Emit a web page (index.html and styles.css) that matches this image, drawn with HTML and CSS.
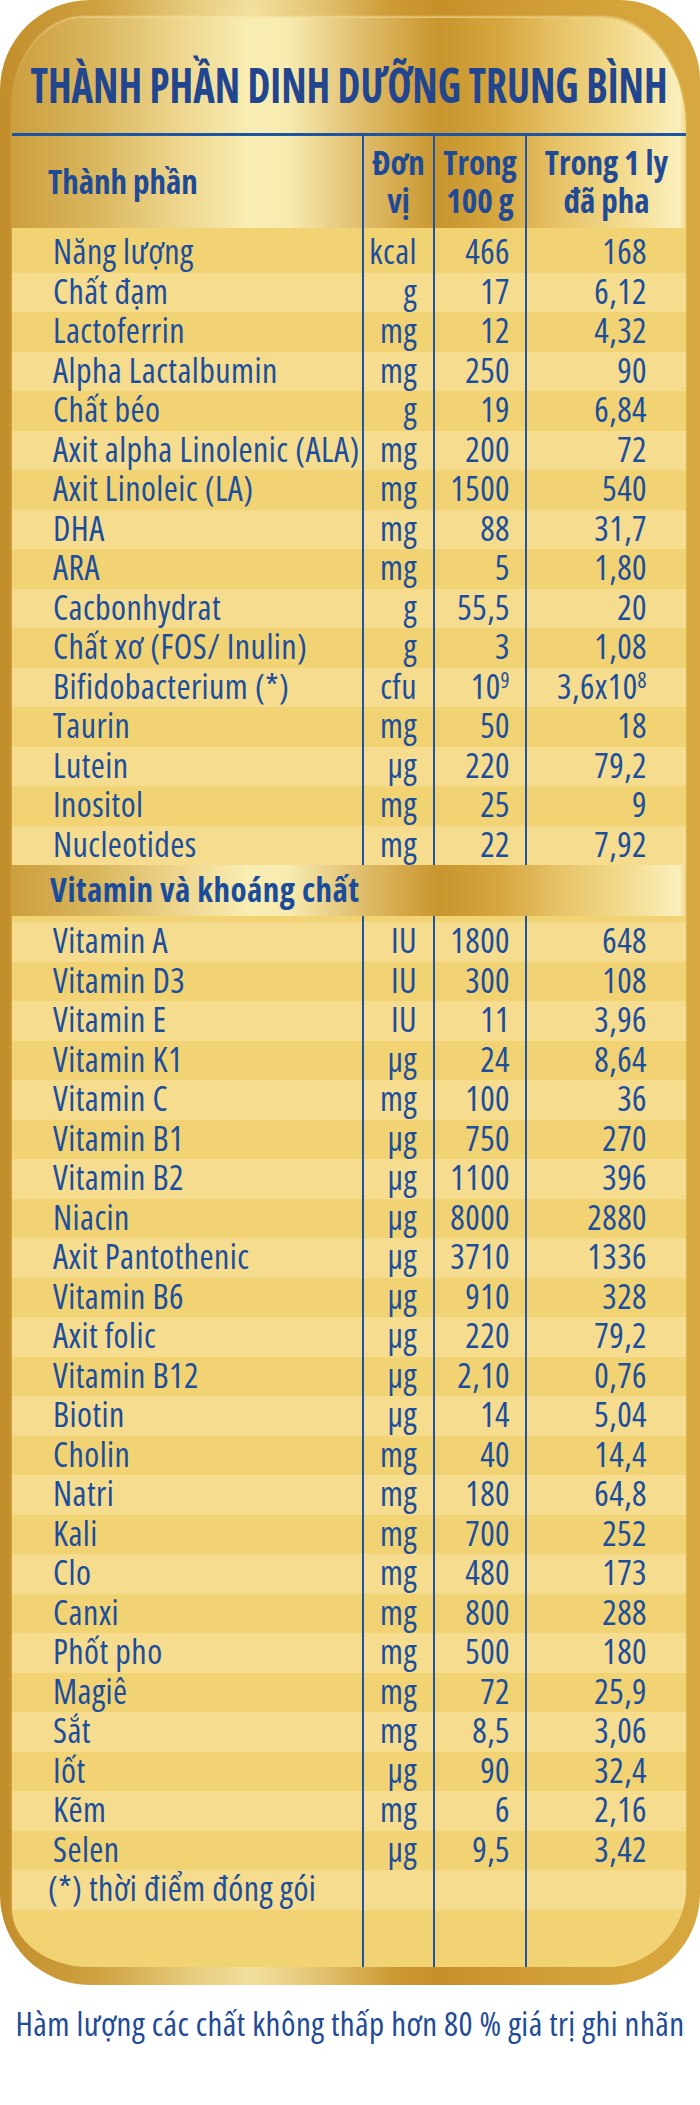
FILE: index.html
```html
<!DOCTYPE html>
<html lang="vi">
<head>
<meta charset="utf-8">
<title>Thành phần dinh dưỡng trung bình</title>
<link rel="stylesheet" href="styles.css">
</head>
<body>
<div class="label">
  <div class="panel">
    <h1 class="title"><span class="title-text">THÀNH PHẦN DINH DƯỠNG TRUNG BÌNH</span></h1>
    <div class="row head">
      <div class="c name">Thành phần</div>
      <div class="c unit">Đơn<br>vị</div>
      <div class="c v100">Trong<br>100 g</div>
      <div class="c vcup">Trong 1 ly<br>đã pha</div>
    </div>
    <div class="sec sec1">
      <div class="row pad"><div class="c"></div><div class="c"></div><div class="c"></div><div class="c"></div></div>
      <div class="row"><div class="c name">Năng lượng</div><div class="c unit">kcal</div><div class="c v100">466</div><div class="c vcup">168</div></div>
      <div class="row"><div class="c name">Chất đạm</div><div class="c unit">g</div><div class="c v100">17</div><div class="c vcup">6,12</div></div>
      <div class="row"><div class="c name">Lactoferrin</div><div class="c unit">mg</div><div class="c v100">12</div><div class="c vcup">4,32</div></div>
      <div class="row"><div class="c name">Alpha Lactalbumin</div><div class="c unit">mg</div><div class="c v100">250</div><div class="c vcup">90</div></div>
      <div class="row"><div class="c name">Chất béo</div><div class="c unit">g</div><div class="c v100">19</div><div class="c vcup">6,84</div></div>
      <div class="row"><div class="c name">Axit alpha Linolenic (ALA)</div><div class="c unit">mg</div><div class="c v100">200</div><div class="c vcup">72</div></div>
      <div class="row"><div class="c name">Axit Linoleic (LA)</div><div class="c unit">mg</div><div class="c v100">1500</div><div class="c vcup">540</div></div>
      <div class="row"><div class="c name">DHA</div><div class="c unit">mg</div><div class="c v100">88</div><div class="c vcup">31,7</div></div>
      <div class="row"><div class="c name">ARA</div><div class="c unit">mg</div><div class="c v100">5</div><div class="c vcup">1,80</div></div>
      <div class="row"><div class="c name">Cacbonhydrat</div><div class="c unit">g</div><div class="c v100">55,5</div><div class="c vcup">20</div></div>
      <div class="row"><div class="c name">Chất xơ (FOS/ Inulin)</div><div class="c unit">g</div><div class="c v100">3</div><div class="c vcup">1,08</div></div>
      <div class="row"><div class="c name">Bifidobacterium (*)</div><div class="c unit">cfu</div><div class="c v100">10<sup class="sup">9</sup></div><div class="c vcup">3,6x10<sup class="sup">8</sup></div></div>
      <div class="row"><div class="c name">Taurin</div><div class="c unit">mg</div><div class="c v100">50</div><div class="c vcup">18</div></div>
      <div class="row"><div class="c name">Lutein</div><div class="c unit">µg</div><div class="c v100">220</div><div class="c vcup">79,2</div></div>
      <div class="row"><div class="c name">Inositol</div><div class="c unit">mg</div><div class="c v100">25</div><div class="c vcup">9</div></div>
      <div class="row"><div class="c name">Nucleotides</div><div class="c unit">mg</div><div class="c v100">22</div><div class="c vcup">7,92</div></div>
    </div>
    <div class="band">Vitamin và khoáng chất</div>
    <div class="sec sec2">
      <div class="row pad"><div class="c"></div><div class="c"></div><div class="c"></div><div class="c"></div></div>
      <div class="row"><div class="c name">Vitamin A</div><div class="c unit">IU</div><div class="c v100">1800</div><div class="c vcup">648</div></div>
      <div class="row"><div class="c name">Vitamin D3</div><div class="c unit">IU</div><div class="c v100">300</div><div class="c vcup">108</div></div>
      <div class="row"><div class="c name">Vitamin E</div><div class="c unit">IU</div><div class="c v100">11</div><div class="c vcup">3,96</div></div>
      <div class="row"><div class="c name">Vitamin K1</div><div class="c unit">µg</div><div class="c v100">24</div><div class="c vcup">8,64</div></div>
      <div class="row"><div class="c name">Vitamin C</div><div class="c unit">mg</div><div class="c v100">100</div><div class="c vcup">36</div></div>
      <div class="row"><div class="c name">Vitamin B1</div><div class="c unit">µg</div><div class="c v100">750</div><div class="c vcup">270</div></div>
      <div class="row"><div class="c name">Vitamin B2</div><div class="c unit">µg</div><div class="c v100">1100</div><div class="c vcup">396</div></div>
      <div class="row"><div class="c name">Niacin</div><div class="c unit">µg</div><div class="c v100">8000</div><div class="c vcup">2880</div></div>
      <div class="row"><div class="c name">Axit Pantothenic</div><div class="c unit">µg</div><div class="c v100">3710</div><div class="c vcup">1336</div></div>
      <div class="row"><div class="c name">Vitamin B6</div><div class="c unit">µg</div><div class="c v100">910</div><div class="c vcup">328</div></div>
      <div class="row"><div class="c name">Axit folic</div><div class="c unit">µg</div><div class="c v100">220</div><div class="c vcup">79,2</div></div>
      <div class="row"><div class="c name">Vitamin B12</div><div class="c unit">µg</div><div class="c v100">2,10</div><div class="c vcup">0,76</div></div>
      <div class="row"><div class="c name">Biotin</div><div class="c unit">µg</div><div class="c v100">14</div><div class="c vcup">5,04</div></div>
      <div class="row"><div class="c name">Cholin</div><div class="c unit">mg</div><div class="c v100">40</div><div class="c vcup">14,4</div></div>
      <div class="row"><div class="c name">Natri</div><div class="c unit">mg</div><div class="c v100">180</div><div class="c vcup">64,8</div></div>
      <div class="row"><div class="c name">Kali</div><div class="c unit">mg</div><div class="c v100">700</div><div class="c vcup">252</div></div>
      <div class="row"><div class="c name">Clo</div><div class="c unit">mg</div><div class="c v100">480</div><div class="c vcup">173</div></div>
      <div class="row"><div class="c name">Canxi</div><div class="c unit">mg</div><div class="c v100">800</div><div class="c vcup">288</div></div>
      <div class="row"><div class="c name">Phốt pho</div><div class="c unit">mg</div><div class="c v100">500</div><div class="c vcup">180</div></div>
      <div class="row"><div class="c name">Magiê</div><div class="c unit">mg</div><div class="c v100">72</div><div class="c vcup">25,9</div></div>
      <div class="row"><div class="c name">Sắt</div><div class="c unit">mg</div><div class="c v100">8,5</div><div class="c vcup">3,06</div></div>
      <div class="row"><div class="c name">Iốt</div><div class="c unit">µg</div><div class="c v100">90</div><div class="c vcup">32,4</div></div>
      <div class="row"><div class="c name">Kẽm</div><div class="c unit">mg</div><div class="c v100">6</div><div class="c vcup">2,16</div></div>
      <div class="row"><div class="c name">Selen</div><div class="c unit">µg</div><div class="c v100">9,5</div><div class="c vcup">3,42</div></div>
      <div class="row note"><div class="c name">(*) thời điểm đóng gói</div><div class="c"></div><div class="c"></div><div class="c"></div></div>
      <div class="row fill"><div class="c"></div><div class="c"></div><div class="c"></div><div class="c"></div></div>
    </div>
  </div>
</div>
<p class="footer">Hàm lượng các chất không thấp hơn 80 % giá trị ghi nhãn</p>
</body>
</html>
```

FILE: styles.css
```css
html, body {
  margin: 0;
  padding: 0;
  background: #ffffff;
}

body {
  font-family: "Open Sans", "DejaVu Sans Condensed", sans-serif;
  font-stretch: 75%;
  color: #1b4e9d;
}

.label {
  width: 700px;
  height: 1985px;
  box-sizing: border-box;
  padding: 18px 14px 18px 12px;
  border-radius: 90px 80px 92px 90px;
  background: linear-gradient(90deg, #c28e2b 0%, #cfa140 14%, #e6cb7c 27%, #f2e09e 36%, #e2c170 46%, #cd9a34 56%, #c68f29 63%, #d09b35 75%, #d5a43b 88%, #d7a83f 100%);
}

.panel {
  height: 100%;
  display: flex;
  flex-direction: column;
  overflow: hidden;
  border-radius: 72px 84px 80px 78px / 92px 110px 80px 58px;
  background: linear-gradient(90deg, #cc9f3e 0%, #dab860 13%, #eed68e 25%, #f8edb2 35%, #f7ebb0 41%, #e3c477 50%, #d4a849 58%, #c8952e 63.5%, #d6a63f 72%, #e6c267 81%, #f2d98a 90%, #faefbc 99%, #f0d88a 100%);
  box-shadow: 0 -2px 2px rgba(255, 240, 185, 0.55);
}

.title {
  margin: 0;
  height: 115px;
  box-sizing: border-box;
  padding-top: 42px;
  display: flex;
  justify-content: center;
  font-size: 49px;
  line-height: 49px;
  font-weight: 700;
  color: #22458f;
  white-space: nowrap;
}

.title-text {
  display: inline-block;
  flex: none;
  transform: scaleX(0.834);
  transform-origin: center;
}

.row {
  display: grid;
  grid-template-columns: 350px 71px 92px 161px;
  height: 39.5px;
  font-size: 34px;
  letter-spacing: 0.45px;
  line-height: 37.5px;
  background: #f2d373;
  white-space: nowrap;
}

.c + .c {
  border-left: 2px solid #1d55a4;
}

.name {
  padding-left: 41px;
}

.unit {
  text-align: right;
  padding-right: 16px;
}

.v100 {
  text-align: right;
  padding-right: 15px;
}

.vcup {
  text-align: right;
  padding-right: 39px;
}

.sup {
  font-size: 0.62em;
  line-height: 0;
  vertical-align: 0.5em;
}

.row.head {
  height: 92px;
  border-top: 3px solid #1d55a4;
  background: transparent;
  font-size: 33px;
  letter-spacing: 0;
  font-weight: 700;
  color: #1f4a96;
  line-height: 38px;
  align-items: center;
}

.row.head .c {
  height: 100%;
  display: flex;
  align-items: center;
  justify-content: center;
  text-align: center;
  padding: 0;
}

.row.head .name {
  justify-content: flex-start;
  padding-left: 36px;
}

.row.pad {
  height: 5px;
}

.sec2 .row.pad {
  height: 6px;
}

.sec1 .row:nth-child(2n+3) {
  background: #f5dc8e;
}

.sec2 .row:nth-child(2n+2) {
  background: #f5dc8e;
}

.row.note .name {
  padding-left: 36px;
}

.sec2 {
  flex: 1;
  display: flex;
  flex-direction: column;
}

.row.fill {
  flex: 1;
  height: auto;
}

.band {
  height: 51px;
  line-height: 49px;
  padding-left: 38px;
  font-size: 33px;
  letter-spacing: 0.5px;
  font-weight: 700;
  color: #1b4c9b;
  white-space: nowrap;
}

.footer {
  margin: 19px 0 0;
  text-align: center;
  font-size: 33px;
  letter-spacing: 0.45px;
  line-height: 40px;
  color: #1f4b97;
  white-space: nowrap;
}
```
